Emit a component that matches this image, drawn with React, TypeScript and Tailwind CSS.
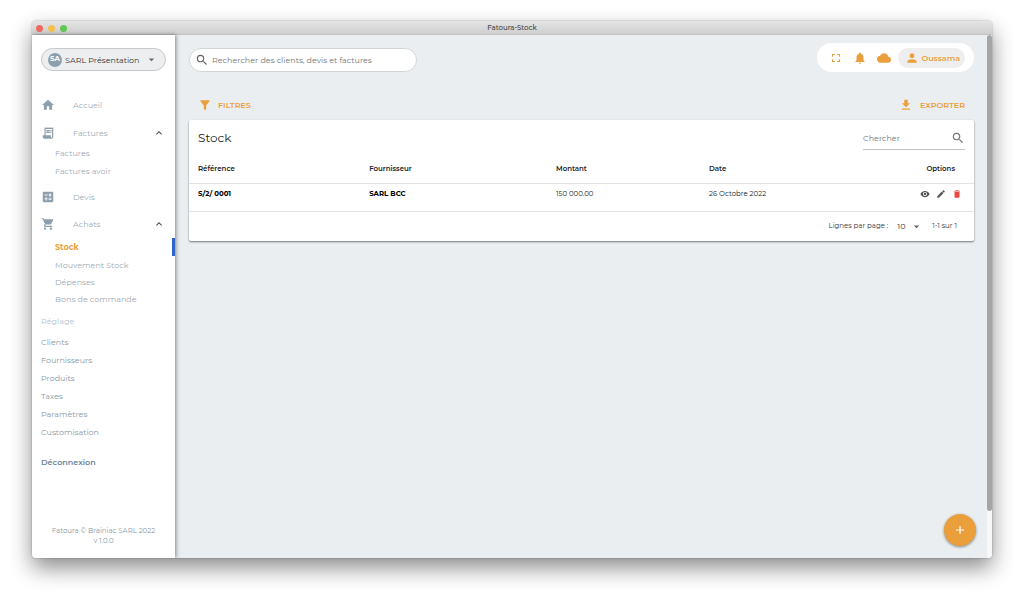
import type { ComponentType } from "react";
import {
  MdAdd,
  MdArrowDropDown,
  MdCalculate,
  MdCloud,
  MdDelete,
  MdDownload,
  MdEdit,
  MdFilterAlt,
  MdFullscreen,
  MdHome,
  MdKeyboardArrowUp,
  MdNotifications,
  MdPerson,
  MdReceiptLong,
  MdSearch,
  MdShoppingCart,
  MdVisibility,
} from "react-icons/md";

type Icon = ComponentType<{ className?: string }>;

function NavRow({ icon: IconTag, label, open }: { icon: Icon; label: string; open?: boolean }) {
  const inner = (
    <>
      <IconTag className="size-[14px] shrink-0 text-[#8d9eac]" />
      <span className="ml-[18px] flex-1 text-left">{label}</span>
      {open && <MdKeyboardArrowUp className="size-3 text-[#4a4a4a]" />}
    </>
  );
  const cls = "flex h-5 w-full items-center pr-[10px] pl-[9px] text-[#9eabb6]";
  return open ? (
    <button type="button" aria-expanded="true" className={cls}>
      {inner}
    </button>
  ) : (
    <a href="#" className={cls}>
      {inner}
    </a>
  );
}

function SubLink({ label, active, compact }: { label: string; active?: boolean; compact?: boolean }) {
  const height = compact ? "h-4" : "h-[18px]";
  const tone = active
    ? "border-r-[3px] border-[#2f66c4] font-bold text-[#eb9f3b]"
    : "text-[#9eabb6]";
  return (
    <a
      href="#"
      aria-current={active ? "page" : undefined}
      className={`flex items-center pl-[23px] ${height} ${tone}`}
    >
      {label}
    </a>
  );
}

const settings = ["Clients", "Fournisseurs", "Produits", "Taxes", "Paramètres", "Customisation"];

function Sidebar() {
  return (
    <aside className="z-10 flex w-[143px] shrink-0 flex-col bg-white pt-[13px] text-[8px] shadow-[1px_0_4px_rgba(0,0,0,0.45)]">
      <button
        type="button"
        className="mr-[9px] ml-[9px] flex h-[23px] items-center rounded-full border border-[#c6c8ca] bg-[#eceef0] pr-[7px] pl-[6px] text-[8px] text-[#333]"
      >
        <span className="flex size-[14px] shrink-0 items-center justify-center rounded-full bg-[#8d9eac] text-[7px] font-bold text-white">
          SA
        </span>
        <span className="ml-[3px] flex-1 text-left whitespace-nowrap">SARL Présentation</span>
        <MdArrowDropDown className="size-[13px] shrink-0 text-[#666]" />
      </button>
      <nav className="mt-6 flex flex-col">
        <NavRow icon={MdHome} label="Accueil" />
        <div className="mt-2">
          <NavRow icon={MdReceiptLong} label="Factures" open />
          <div className="pt-px">
            <SubLink label="Factures" />
            <SubLink label="Factures avoir" />
          </div>
        </div>
        <div className="mt-[7px]">
          <NavRow icon={MdCalculate} label="Devis" />
        </div>
        <div className="mt-[7px]">
          <NavRow icon={MdShoppingCart} label="Achats" open />
          <div className="pt-1">
            <SubLink label="Stock" active />
            <SubLink label="Mouvement Stock" />
            <SubLink label="Dépenses" compact />
            <SubLink label="Bons de commande" />
          </div>
        </div>
        <h2 className="mt-1 h-[18px] pl-[9px] leading-[18px] text-[#b9c3cb]">Réglage</h2>
        <ul className="mt-[3px]">
          {settings.map((s) => (
            <li key={s}>
              <a href="#" className="flex h-[18px] items-center pl-[9px] text-[#8797a4]">
                {s}
              </a>
            </li>
          ))}
        </ul>
        <a href="#" className="mt-3 flex h-[18px] items-center pl-[9px] font-semibold text-[#6d8396]">
          Déconnexion
        </a>
      </nav>
      <footer className="mt-auto pb-3 text-center text-[7px] leading-[10px] text-[#8797a4]">
        Fatoura © Brainiac SARL 2022
        <br />v 1.0.0
      </footer>
    </aside>
  );
}

function TopBar() {
  return (
    <header className="flex h-[29px] items-end justify-between">
      <label className="flex h-6 w-[228px] items-center rounded-full border border-[#d3d6d8] bg-white pr-3 pl-[5px]">
        <MdSearch className="size-[14px] shrink-0 text-[#666]" />
        <input
          type="search"
          aria-label="Rechercher"
          placeholder="Rechercher des clients, devis et factures"
          className="ml-[3px] min-w-0 flex-1 bg-transparent text-[8px] outline-none placeholder:text-[#757575]"
        />
      </label>
      <div className="flex h-[29px] items-center rounded-full bg-white pr-[9px] pl-3 text-[#eb9f3b]">
        <button type="button" aria-label="Plein écran">
          <MdFullscreen className="size-[14px]" />
        </button>
        <button type="button" aria-label="Notifications" className="ml-[10px]">
          <MdNotifications className="size-[14px]" />
        </button>
        <button type="button" aria-label="Cloud" className="ml-[10px]">
          <MdCloud className="size-[14px]" />
        </button>
        <button
          type="button"
          className="ml-[7px] flex h-5 items-center rounded-full bg-[#eeeeee] pr-[5px] pl-[7px] text-[8px] font-semibold"
        >
          <MdPerson className="size-[14px]" />
          <span className="ml-[2px]">Oussama</span>
        </button>
      </div>
    </header>
  );
}

function StockCard() {
  return (
    <section className="rounded-[2px] bg-white text-[#222] shadow-[0_1px_2px_rgba(0,0,0,0.5)]">
      <div className="flex h-9 items-center justify-between px-[9px]">
        <h1 className="text-[12px]">Stock</h1>
        <label className="flex h-6 w-[102px] items-center border-b border-[#c4c4c4]">
          <input
            type="search"
            aria-label="Chercher"
            placeholder="Chercher"
            className="min-w-0 flex-1 bg-transparent text-[8px] outline-none placeholder:text-[#757575]"
          />
          <MdSearch className="size-[14px] shrink-0 text-[#777]" />
        </label>
      </div>
      <table className="w-full table-fixed text-left text-[7px]">
        <colgroup>
          <col className="w-[21.8%]" />
          <col className="w-[23.8%]" />
          <col className="w-[19.5%]" />
          <col className="w-[20%]" />
          <col />
        </colgroup>
        <thead>
          <tr className="h-[27px] border-b border-[#e2e2e2]">
            <th className="pl-[9px] font-semibold">Référence</th>
            <th className="pl-[9px] font-semibold">Fournisseur</th>
            <th className="pl-[9px] font-semibold">Montant</th>
            <th className="pl-[9px] font-semibold">Date</th>
            <th className="pr-[19px] text-right font-semibold">Options</th>
          </tr>
        </thead>
        <tbody>
          <tr className="h-7 border-b border-[#e2e2e2] align-top leading-[20px]">
            <td className="pl-[9px] font-bold text-black">S/2/ 0001</td>
            <td className="pl-[9px] font-bold text-black">SARL BCC</td>
            <td className="pl-[9px]">150 000.00</td>
            <td className="pl-[9px]">26 Octobre 2022</td>
            <td className="pr-3">
              <div className="flex h-5 items-center justify-end gap-[6px] text-[#555]">
                <button type="button" aria-label="Voir">
                  <MdVisibility className="size-[10px]" />
                </button>
                <button type="button" aria-label="Modifier">
                  <MdEdit className="size-[10px]" />
                </button>
                <button type="button" aria-label="Supprimer" className="text-[#e8483f]">
                  <MdDelete className="size-[10px]" />
                </button>
              </div>
            </td>
          </tr>
        </tbody>
      </table>
      <div className="flex h-[29px] items-center justify-end pr-[17px] text-[7px] text-[#333]">
        <label htmlFor="rows">Lignes par page :</label>
        <div className="ml-[9px] flex items-center">
          <select
            id="rows"
            className="h-3 w-[13px] appearance-none bg-transparent text-[8px] leading-[10px] outline-none"
          >
            <option>10</option>
          </select>
          <MdArrowDropDown className="size-[13px] text-[#666]" />
        </div>
        <span className="ml-[9px]">1-1 sur 1</span>
      </div>
    </section>
  );
}

export default function App() {
  return (
    <div className="flex min-h-screen flex-col bg-white px-8 pt-[21px] pb-[42px] font-['Montserrat','Inter',sans-serif]">
      <div className="flex flex-1 flex-col overflow-hidden rounded-[4px] shadow-[0_10px_22px_rgba(0,0,0,0.45),0_0_2px_rgba(0,0,0,0.35)]">
        <div className="grid h-[14px] grid-cols-3 items-center border-b border-[#c2c2c2] bg-linear-to-b from-[#e4e4e4] to-[#cfcfcf] px-1 pt-px">
          <div className="flex gap-[5px]">
            <span className="size-[7px] rounded-full bg-[#ee6a5f]" />
            <span className="size-[7px] rounded-full bg-[#f5bf4f]" />
            <span className="size-[7px] rounded-full bg-[#62c554]" />
          </div>
          <span className="text-center text-[7px] leading-[10px] font-medium text-[#444]">Fatoura-Stock</span>
        </div>
        <div className="flex flex-1">
          <Sidebar />
          <main className="relative flex-1 bg-[#eaeef1] pt-2 pr-[13px] pl-[14px]">
            <TopBar />
            <div className="mt-5 mb-[2px] flex h-[26px] items-center justify-between pr-[9px] pl-[9px] text-[8px] font-semibold text-[#eb9f3b]">
              <button type="button" className="flex items-center">
                <MdFilterAlt className="size-[14px]" />
                <span className="ml-[6px]">FILTRES</span>
              </button>
              <button type="button" className="flex items-center">
                <MdDownload className="size-[14px]" />
                <span className="ml-[7px]">EXPORTER</span>
              </button>
            </div>
            <StockCard />
            <button
              type="button"
              aria-label="Ajouter"
              className="absolute right-[11px] bottom-3 flex size-8 items-center justify-center rounded-full bg-[#eb9f3b] text-white shadow-[0_1px_3px_rgba(0,0,0,0.45)]"
            >
              <MdAdd className="size-[14px]" />
            </button>
          </main>
          <div className="flex w-[5px] flex-col bg-[#f8f8f8]">
            <div className="h-[91%] rounded-full bg-[#a5a5a5]" />
          </div>
        </div>
      </div>
    </div>
  );
}
